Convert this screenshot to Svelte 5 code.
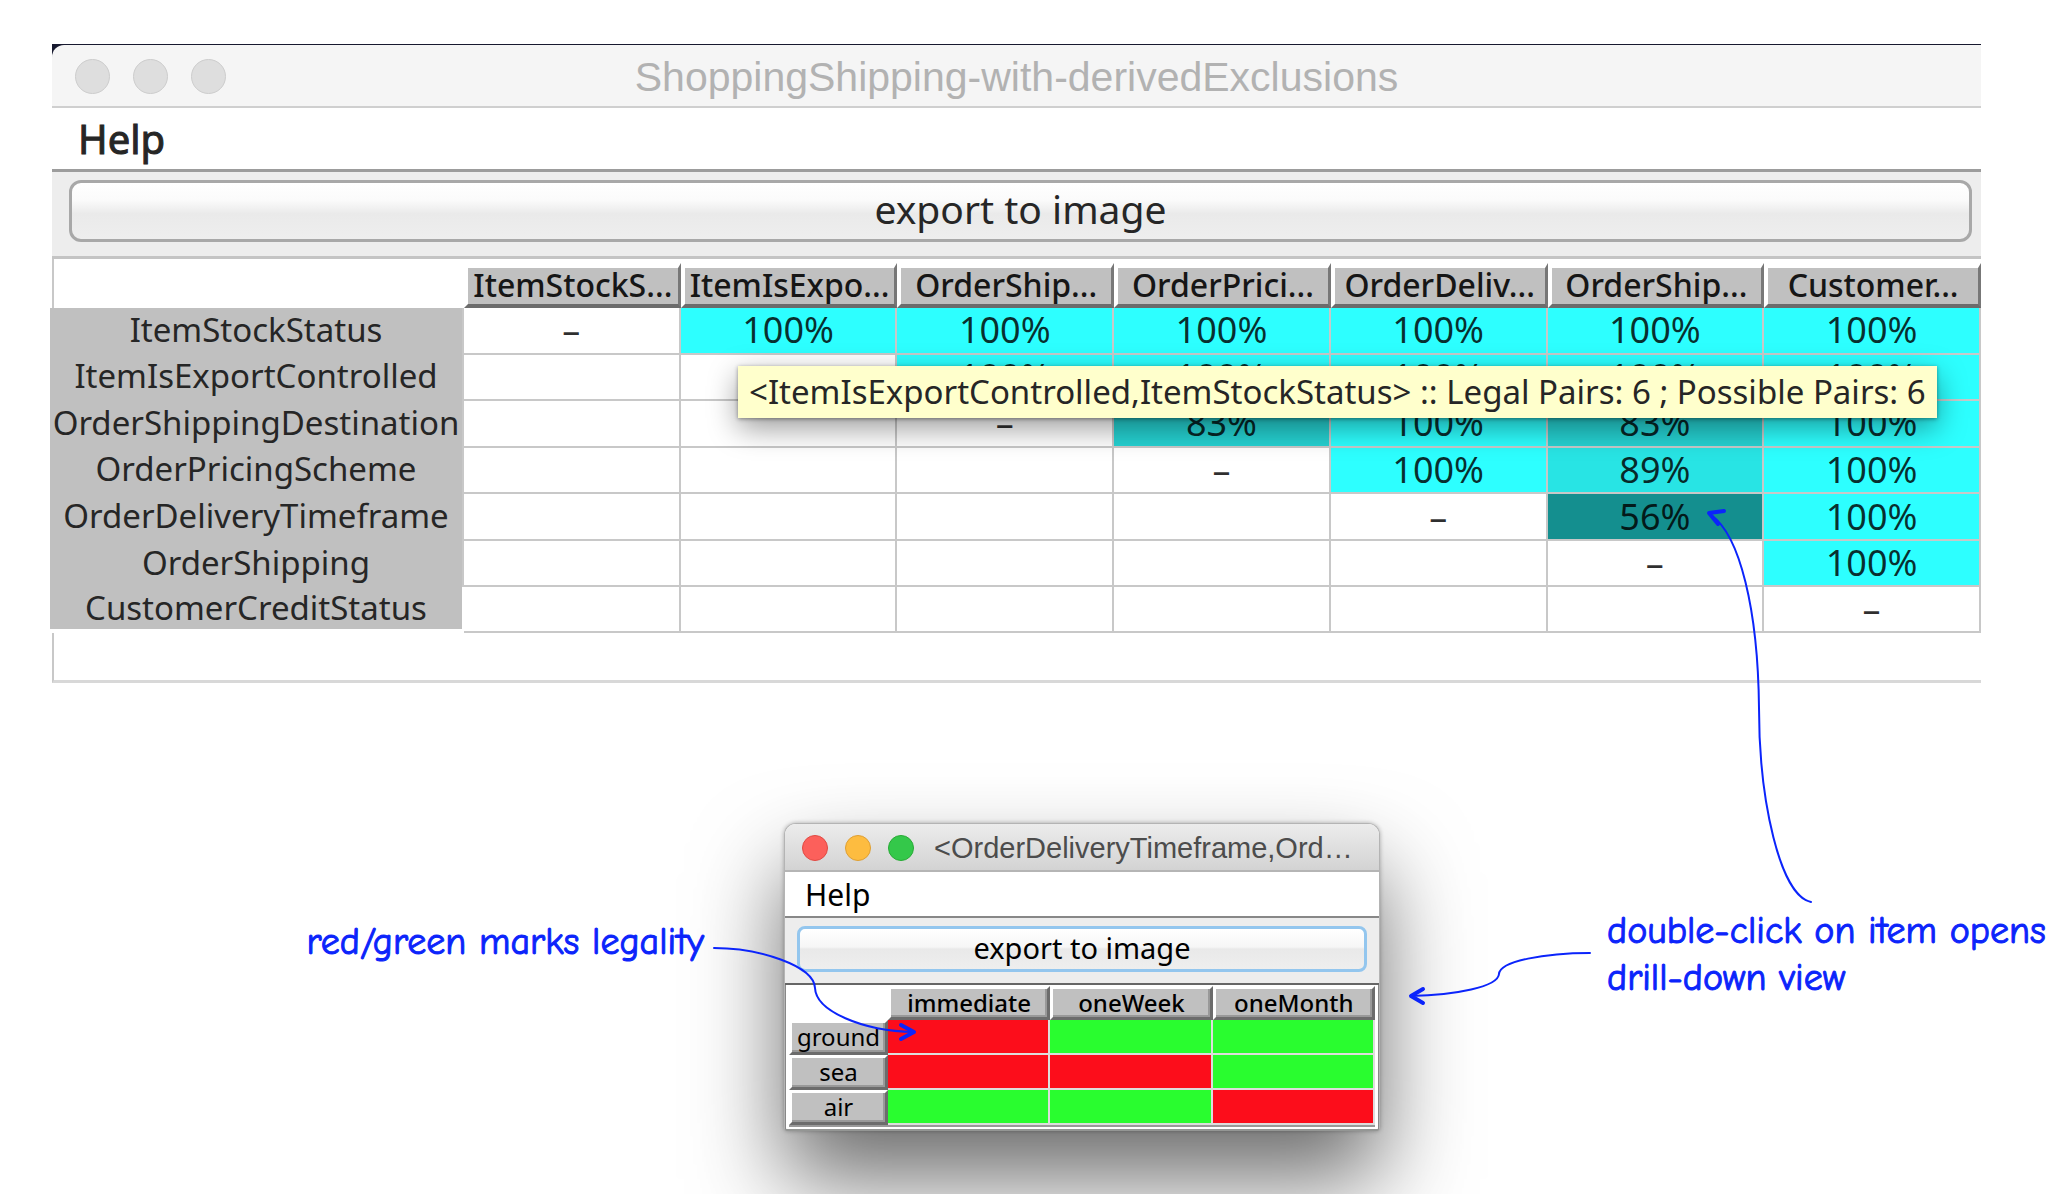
<script>
  const columns = ['ItemStockS...', 'ItemIsExpo...', 'OrderShip...', 'OrderPrici...', 'OrderDeliv...', 'OrderShip...', 'Customer...'];
  const rows = [
    { name: 'ItemStockStatus', cells: ['–', '100%', '100%', '100%', '100%', '100%', '100%'] },
    { name: 'ItemIsExportControlled', cells: ['', '–', '100%', '100%', '100%', '100%', '100%'] },
    { name: 'OrderShippingDestination', cells: ['', '', '–', '83%', '100%', '83%', '100%'] },
    { name: 'OrderPricingScheme', cells: ['', '', '', '–', '100%', '89%', '100%'] },
    { name: 'OrderDeliveryTimeframe', cells: ['', '', '', '', '–', '56%', '100%'] },
    { name: 'OrderShipping', cells: ['', '', '', '', '', '–', '100%'] },
    { name: 'CustomerCreditStatus', cells: ['', '', '', '', '', '', '–'] }
  ];
  const values = ['immediate', 'oneWeek', 'oneMonth'];
  const legality = [
    { name: 'ground', legal: [false, true, true] },
    { name: 'sea', legal: [false, false, true] },
    { name: 'air', legal: [true, true, false] }
  ];
  const level = (cell) => (cell.endsWith('%') ? 'p' + cell.slice(0, -1) : '');
</script>

<main class="page">
  <section class="window">
    <header class="titlebar">
      <div class="lights"><span></span><span></span><span></span></div>
      <h1>ShoppingShipping-with-derivedExclusions</h1>
    </header>
    <nav class="menu"><button>Help</button></nav>
    <div class="toolbar"><button>export to image</button></div>
    <div class="matrix-pane">
      <table class="matrix">
        <thead>
          <tr>
            <td class="corner"></td>
            {#each columns as column}
              <th scope="col"><div class="bevel">{column}</div></th>
            {/each}
          </tr>
        </thead>
        <tbody>
          {#each rows as row}
            <tr>
              <th scope="row">{row.name}</th>
              {#each row.cells as cell}
                <td class={level(cell)}>{cell}</td>
              {/each}
            </tr>
          {/each}
        </tbody>
      </table>
      <div class="tooltip" role="tooltip">{'<ItemIsExportControlled,ItemStockStatus> :: Legal Pairs: 6 ; Possible Pairs: 6'}</div>
    </div>
  </section>

  <section class="detail">
    <p class="note left">red/green marks legality</p>
    <div class="dialog">
      <header class="dialog-title">
        <div class="dialog-lights"><span class="close"></span><span class="minimize"></span><span class="zoom"></span></div>
        <h2>{'<OrderDeliveryTimeframe,Ord…'}</h2>
      </header>
      <nav class="dialog-menu"><button>Help</button></nav>
      <div class="dialog-toolbar"><button>export to image</button></div>
      <div class="grid-pane">
        <table class="legality">
          <thead>
            <tr>
              <td class="corner"></td>
              {#each values as value}
                <th scope="col"><div class="bevel">{value}</div></th>
              {/each}
            </tr>
          </thead>
          <tbody>
            {#each legality as row}
              <tr>
                <th scope="row"><div class="bevel">{row.name}</div></th>
                {#each row.legal as ok}
                  <td class={ok ? 'legal' : 'illegal'}></td>
                {/each}
              </tr>
            {/each}
          </tbody>
        </table>
      </div>
    </div>
    <p class="note right">double-click on item opens<br />drill-down view</p>
  </section>

  <svg class="arrows" viewBox="0 0 2056 1194" aria-hidden="true">
    <path d="M1811 902 C1780 896 1759 800 1759 708 C1758 610 1740 535 1711 515" />
    <path class="head" d="M1724 511 L1709 513 L1718 524" />
    <path d="M1590 953 C1545 953 1500 961 1499 974 C1498 987 1455 995 1411 996" />
    <path class="head" d="M1423 989 L1411 996 L1423 1003" />
    <path d="M714 948 C760 948 814 966 815 988 C816 1011 862 1031 914 1032" />
    <path class="head" d="M901 1025 L914 1032 L901 1039" />
  </svg>
</main>

<style>
  :global(body) {
    background: #fff;
  }
  .page {
    position: relative;
    padding-top: 44px;
    font-family: 'Noto Sans', 'Open Sans', sans-serif;
    color: #262626;
    overflow: hidden;
    min-height: 100vh;
    box-sizing: border-box;
  }
  h1, h2, p { margin: 0; font-weight: 400; }
  button {
    font-family: inherit;
    color: inherit;
    padding: 0;
    margin: 0;
    border: 0;
    background: none;
  }
  table { border-collapse: separate; border-spacing: 0; table-layout: fixed; }
  th, td { padding: 0; font-weight: 400; text-align: center; box-sizing: border-box; }

  .window {
    margin: 0 75px 0 52px;
    background: #17192f;
    padding-top: 1px;
  }
  .titlebar {
    display: grid;
    grid-template-columns: 1fr auto 1fr;
    align-items: center;
    height: 63px;
    box-sizing: border-box;
    padding-top: 2px;
    border-bottom: 2px solid #cfcfcf;
    border-top-left-radius: 12px;
    background: #f5f5f5;
  }
  .titlebar h1 {
    font-family: 'Liberation Sans', Arial, sans-serif;
    font-size: 41px;
    line-height: 48px;
    color: #b2b2b2;
  }
  .lights { display: flex; gap: 23px; padding-left: 23px; }
  .lights span {
    width: 35px;
    height: 35px;
    box-sizing: border-box;
    border-radius: 50%;
    border: 1px solid #cdcdcd;
    background: #dedede;
  }
  .menu {
    display: flex;
    align-items: center;
    height: 64px;
    box-sizing: border-box;
    padding-left: 26px;
    border-bottom: 3px solid #9c9c9c;
    background: #fff;
  }
  .menu button { font-size: 40px; line-height: 56px; -webkit-text-stroke: 1px #262626; }
  .toolbar {
    display: flex;
    padding: 8px 9px 14px 17px;
    background: #ededed;
    border-bottom: 3px solid #c4c4c4;
  }
  .toolbar button {
    flex: 1;
    height: 62px;
    border: 3px solid #a8a8a8;
    border-radius: 12px;
    background: linear-gradient(#fff 0%, #fbfbfb 30%, #eaeaea 55%, #eee 100%);
    font-size: 39px;
    line-height: 48px;
    padding-bottom: 4px;
  }
  .matrix-pane {
    position: relative;
    border-left: 2px solid #c8c8c8;
    border-bottom: 3px solid #d8d8d8;
    background: #fff;
    padding: 4px 0 47px;
  }
  .matrix {
    width: calc(100% + 4px);
    height: 370px;
    margin-left: -4px;
  }
  .matrix .corner { width: 414px; height: 45px; border: 0; }
  .matrix .bevel {
    height: 45px;
    box-sizing: border-box;
    border-style: solid;
    border-width: 5px 3px 4px 4px;
    border-color: #fff #777 #6c6c6c #fff;
    background: #c0c0c0;
    font-size: 32px;
    font-weight: 500;
    line-height: 34px;
    color: #161616;
    white-space: nowrap;
    overflow: hidden;
  }
  .matrix tbody th {
    background: #c0c0c0;
    font-size: 33px;
    line-height: 42px;
    padding-bottom: 3px;
    white-space: nowrap;
    border-right: 2px solid #c8c8c8;
  }
  .matrix tbody tr:last-child th { border-bottom: 4px solid #fff; border-right-color: #fff; line-height: 40px; padding-bottom: 0; }
  .matrix tbody td {
    border-right: 2px solid #c8c8c8;
    border-bottom: 2px solid #c8c8c8;
    font-size: 36px;
    line-height: 42px;
    color: rgba(0, 0, 0, 0.82);
  }
  .matrix .p100 { background: #2dffff; }
  .matrix .p89 { background: #28e4e4; }
  .matrix .p83 { background: #25d2d2; }
  .matrix .p56 { background: #148f8f; }
  .tooltip {
    position: absolute;
    top: 107px;
    left: 684px;
    right: 44px;
    padding: 4px 0 4px 11px;
    background: #ffffcc;
    box-shadow: 0 10px 30px rgba(0, 0, 0, 0.4), 0 1px 4px rgba(0, 0, 0, 0.4);
    font-size: 33px;
    line-height: 44px;
    white-space: nowrap;
  }

  .detail {
    display: grid;
    grid-template-columns: 784fr 596fr 676fr;
    align-items: start;
    margin-top: 140px;
  }
  .note {
    position: relative;
    z-index: 1;
    font-family: 'Comic Sans MS', 'Comic Neue', Lato, sans-serif;
    font-size: 38px;
    line-height: 47px;
    color: #0b24fb;
    -webkit-text-stroke: 1px #0b24fb;
    white-space: nowrap;
  }
  .left { justify-self: end; margin: 96px 80px 0 0; }
  .right { margin: 85px 0 0 227px; }

  .dialog {
    box-sizing: border-box;
    border: 1px solid #b4b4b4;
    border-bottom: 2px solid #949694;
    border-radius: 12px 12px 4px 4px;
    background: #fff;
    box-shadow: 0 48px 90px rgba(0, 0, 0, 0.58), 0 0 4px rgba(0, 0, 0, 0.3);
    color: #000;
  }
  .dialog-title {
    display: flex;
    align-items: center;
    gap: 20px;
    height: 48px;
    box-sizing: border-box;
    padding: 2px 0 0 17px;
    border-bottom: 2px solid #b5b5b5;
    border-radius: 11px 11px 0 0;
    background: linear-gradient(#ececec, #d3d3d3);
  }
  .dialog-title h2 {
    font-family: 'Liberation Sans', Arial, sans-serif;
    font-size: 29px;
    line-height: 36px;
    color: #4c4c4c;
    white-space: nowrap;
  }
  .dialog-lights { display: flex; gap: 17px; }
  .dialog-lights span {
    width: 26px;
    height: 26px;
    box-sizing: border-box;
    border-radius: 50%;
    border: 1px solid transparent;
  }
  .dialog-lights .close { background: #fc605b; border-color: #e14942; }
  .dialog-lights .minimize { background: #fdbc40; border-color: #df9f32; }
  .dialog-lights .zoom { background: #34c84a; border-color: #27ab35; }
  .dialog-menu {
    display: flex;
    align-items: center;
    height: 46px;
    box-sizing: border-box;
    padding: 2px 0 0 20px;
    border-bottom: 2px solid #888;
  }
  .dialog-menu button { font-size: 30px; line-height: 40px; }
  .dialog-toolbar {
    display: flex;
    padding: 8px 12px 11px;
    background: #ededed;
    border-bottom: 2px solid #666;
  }
  .dialog-toolbar button {
    flex: 1;
    height: 46px;
    border: 3px solid #93c6ee;
    border-radius: 8px;
    background: linear-gradient(#fff 0%, #f6f6f6 45%, #e9e9e9 50%, #eee 100%);
    font-size: 29px;
    line-height: 36px;
    padding-bottom: 2px;
  }
  .grid-pane {
    padding: 1px 3px 2px 3px;
    border-left: 1px solid #888;
    border-right: 1px solid #888;
  }
  .legality { width: 100%; border-bottom: 2px solid #999; }
  .legality .corner { width: 99px; height: 34px; }
  .legality .bevel {
    height: 34px;
    box-sizing: border-box;
    border-style: solid;
    border-width: 3px;
    border-color: #fff #6c6c6c #6c6c6c #fff;
    box-shadow: inset -2px -2px 0 #999;
    background: #c0c0c0;
    font-size: 24px;
    line-height: 28px;
    overflow: hidden;
  }
  .legality thead .bevel { font-weight: 500; }
  .legality tbody .bevel { height: 35px; }
  .legality tbody td {
    height: 35px;
    border-right: 2px solid #ddd;
    border-bottom: 2px solid #ddd;
  }
  .legal { background: #29fd2f; }
  .illegal { background: #fc0d1b; }

  .arrows {
    position: absolute;
    top: 0;
    left: 0;
    width: 100%;
    z-index: 2;
    pointer-events: none;
    fill: none;
    stroke: #0b24fb;
    stroke-width: 2;
    stroke-linecap: round;
    stroke-linejoin: round;
  }
  .head { stroke-width: 4; }
</style>
